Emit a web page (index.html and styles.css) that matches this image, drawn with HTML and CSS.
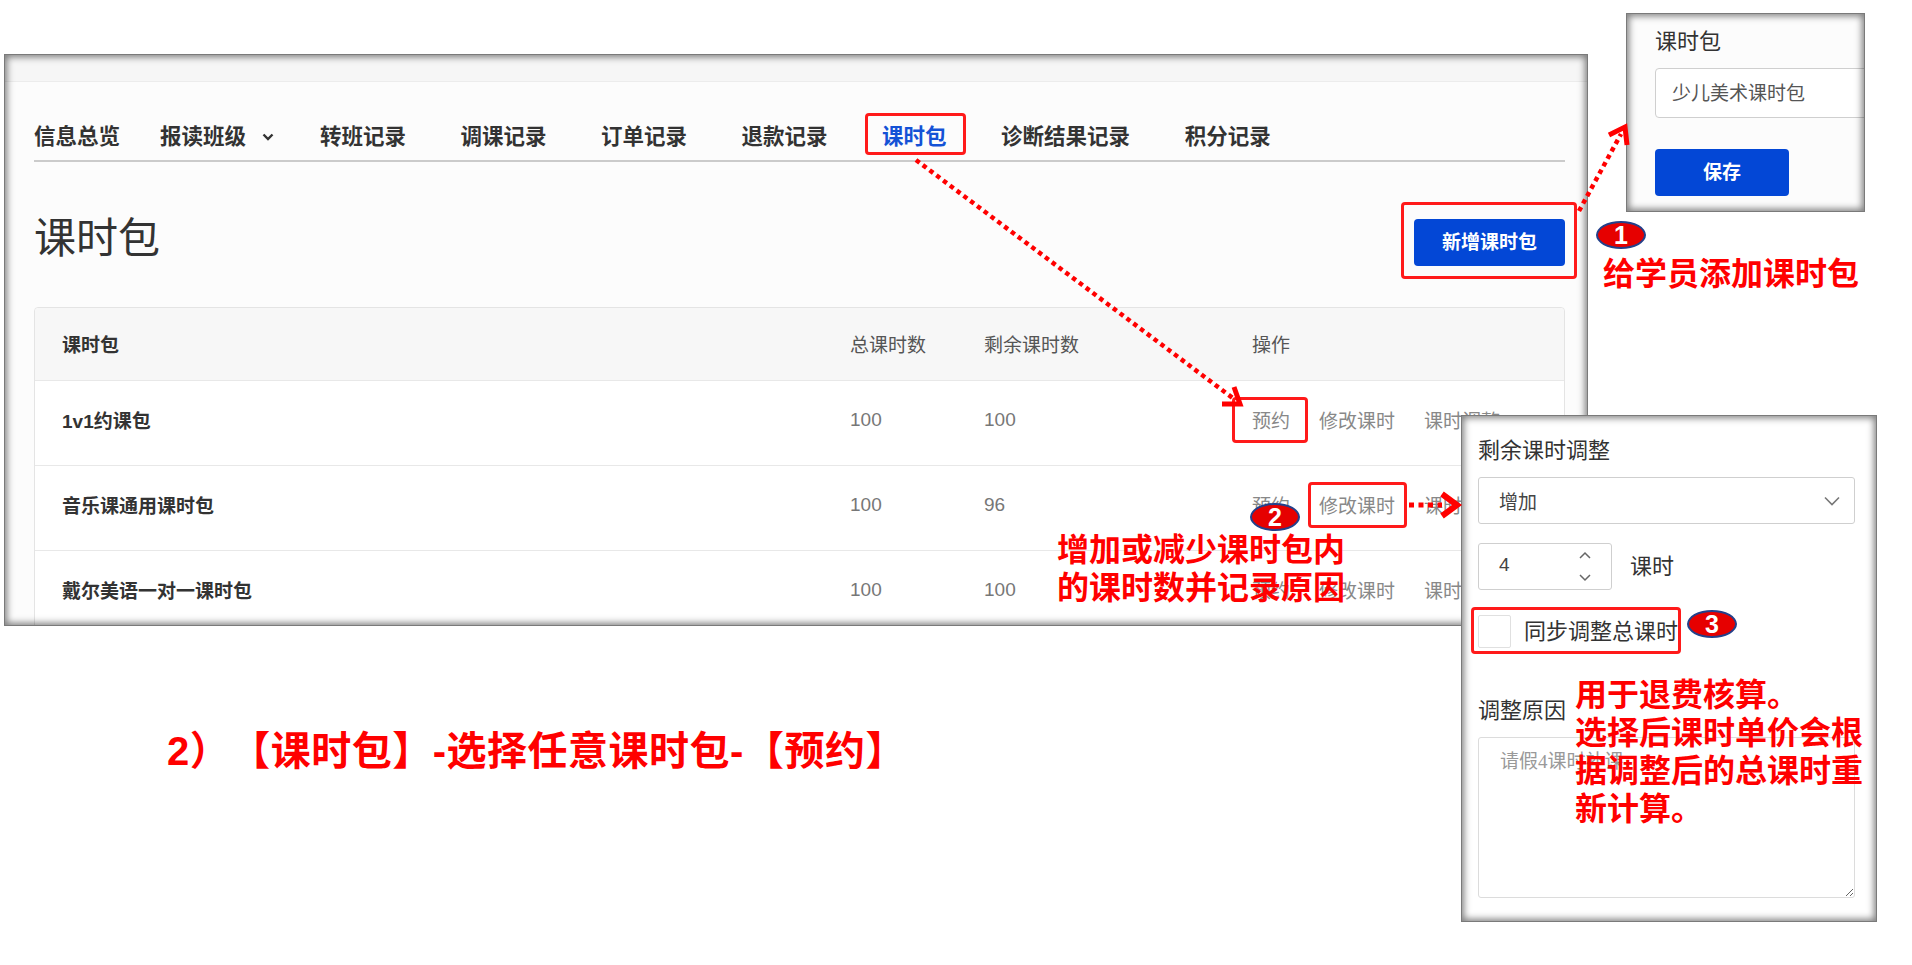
FILE: index.html
```html
<!DOCTYPE html>
<html lang="zh-CN">
<head>
    <meta charset="UTF-8">
    <meta name="viewport" content="width=device-width, initial-scale=1.0">
    <title>课时包</title>
    <link rel="stylesheet" href="styles.css">
</head>
<body>
<div class="slide">

    <!-- screenshot of the student page -->
    <div class="shot main-shot">
        <div class="shot-top"></div>
        <div class="shot-body">
            <nav class="tabs">
                <a class="tab">信息总览</a>
                <a class="tab tab-drop">报读班级
                    <svg width="12" height="8" viewBox="0 0 12 8"><polyline points="1.5,1.5 6,6 10.5,1.5" fill="none" stroke="#333" stroke-width="2.4"/></svg>
                </a>
                <a class="tab">转班记录</a>
                <a class="tab">调课记录</a>
                <a class="tab">订单记录</a>
                <a class="tab">退款记录</a>
                <a class="tab active">课时包</a>
                <a class="tab">诊断结果记录</a>
                <a class="tab">积分记录</a>
            </nav>

            <div class="page-head">
                <h1>课时包</h1>
                <button class="btn btn-add">新增课时包</button>
            </div>

            <div class="table">
                <div class="row row-head">
                    <div class="cell name">课时包</div>
                    <div class="cell">总课时数</div>
                    <div class="cell">剩余课时数</div>
                    <div class="cell">操作</div>
                </div>
                <div class="row">
                    <div class="cell name">1v1约课包</div>
                    <div class="cell num">100</div>
                    <div class="cell num">100</div>
                    <div class="cell actions"><span>预约</span><span>修改课时</span><span>课时调整</span></div>
                </div>
                <div class="row">
                    <div class="cell name">音乐课通用课时包</div>
                    <div class="cell num">100</div>
                    <div class="cell num">96</div>
                    <div class="cell actions"><span>预约</span><span>修改课时</span><span>课时调整</span></div>
                </div>
                <div class="row">
                    <div class="cell name">戴尔美语一对一课时包</div>
                    <div class="cell num">100</div>
                    <div class="cell num">100</div>
                    <div class="cell actions"><span>预约</span><span>修改课时</span><span>课时调整</span></div>
                </div>
            </div>
        </div>
    </div>

    <p class="caption">2）【课时包】-选择任意课时包-【预约】</p>

    <!-- add package dialog -->
    <div class="shot panel panel-save">
        <div class="field-label">课时包</div>
        <input class="text-input" type="text" value="少儿美术课时包">
        <button class="btn btn-save">保存</button>
    </div>

    <!-- adjust hours dialog -->
    <div class="shot panel panel-adjust">
        <div class="field-label">剩余课时调整</div>
        <div class="select">
            <span>增加</span>
            <svg width="16" height="10" viewBox="0 0 16 10"><polyline points="1,1.5 8,8.5 15,1.5" fill="none" stroke="#777" stroke-width="1.6"/></svg>
        </div>
        <div class="num-row">
            <div class="num-input">
                <span>4</span>
                <svg width="14" height="32" viewBox="0 0 14 32"><polyline points="2,7 7,2 12,7" fill="none" stroke="#666" stroke-width="1.5"/><polyline points="2,24 7,29 12,24" fill="none" stroke="#666" stroke-width="1.5"/></svg>
            </div>
            <span class="unit">课时</span>
        </div>
        <label class="check-row"><span class="checkbox"></span>同步调整总课时</label>
        <div class="field-label reason-label">调整原因</div>
        <textarea class="reason" placeholder="请假4课时补课"></textarea>
    </div>

    <!-- annotations -->
    <div class="mark mark-tab"></div>
    <div class="mark mark-add"></div>
    <div class="mark mark-book"></div>
    <div class="mark mark-edit"></div>
    <div class="mark mark-sync"></div>

    <div class="badge badge-1">1</div>
    <div class="badge badge-2">2</div>
    <div class="badge badge-3">3</div>

    <p class="note note-add">给学员添加课时包</p>
    <p class="note note-adjust">增加或减少课时包内<br>的课时数并记录原因</p>
    <p class="note note-sync">用于退费核算。<br>选择后课时单价会根<br>据调整后的总课时重<br>新计算。</p>

    <svg class="arrows" width="1912" height="965" viewBox="0 0 1912 965">
        <g stroke="#ff0000" fill="none" stroke-width="4.5">
            <line x1="916" y1="160" x2="1234" y2="399" stroke-dasharray="4.5 4"/>
            <polyline points="1234,387 1240,404 1222,404" stroke-width="5"/>
            <line x1="1579" y1="211" x2="1621" y2="134" stroke-dasharray="4.5 4"/>
            <polyline points="1609,135 1625,127 1627,145" stroke-width="5"/>
            <line x1="1409" y1="505" x2="1442" y2="505" stroke-dasharray="5 4.5" stroke-width="5"/>
            <polyline points="1442,494 1457,505 1442,516" stroke-width="6"/>
        </g>
    </svg>
</div>
</body>
</html>
```

FILE: styles.css
```css
* {
    box-sizing: border-box;
}

body {
    margin: 0;
    background: #fff;
    font-family: "Liberation Sans", "Noto Sans CJK SC", sans-serif;
    color: #333;
}

.slide {
    position: relative;
    width: 1912px;
    height: 965px;
    overflow: hidden;
    padding: 54px 0 0 4px;
}

/* screenshot frames */
.shot {
    position: relative;
    background: #fcfcfc;
    overflow: hidden;
}

.shot::after {
    content: "";
    position: absolute;
    top: 0;
    left: 0;
    right: 0;
    bottom: 0;
    border: 1px solid #7a7a7a;
    box-shadow: inset 0 0 7px 2px rgba(0, 0, 0, 0.5);
    pointer-events: none;
}

.main-shot {
    width: 1584px;
    height: 572px;
}

.shot-top {
    height: 28px;
    background: #f6f6f6;
    border-bottom: 1px solid #ececec;
}

.shot-body {
    padding: 0 23px 0 30px;
}

/* tabs */
.tabs {
    display: flex;
    align-items: center;
    gap: 54.5px;
    padding: 40px 0 8px;
    border-bottom: 2px solid #cbcbcb;
}

.tab {
    display: flex;
    align-items: center;
    font-size: 21.5px;
    font-weight: 700;
    line-height: 30px;
    color: #333;
    white-space: nowrap;
}

.tab-drop {
    margin-left: -14.5px;
    margin-right: -8.5px;
}

.tab-drop svg {
    margin-left: 16px;
}

.tab.active {
    color: #1452d6;
}

/* title + button */
.page-head {
    display: flex;
    justify-content: space-between;
    align-items: flex-start;
    margin-top: 57px;
}

.page-head h1 {
    margin: 0;
    font-size: 42px;
    font-weight: 400;
    line-height: 40px;
    color: #333;
}

.btn {
    border: 0;
    border-radius: 4px;
    background: #0347d6;
    color: #fff;
    font-family: inherit;
    font-size: 19px;
    font-weight: 700;
    padding: 0 0 4px;
    cursor: pointer;
}

.btn-add {
    width: 151px;
    height: 47px;
}

/* table */
.table {
    margin-top: 41px;
    border: 1px solid #e4e4e4;
    border-radius: 4px;
    background: #fff;
}

.row {
    display: grid;
    grid-template-columns: 787px 134px 268px 1fr;
    align-items: center;
    height: 85px;
    padding-bottom: 7px;
    border-top: 1px solid #e8e8e8;
    font-size: 19px;
    white-space: nowrap;
}

.row-head {
    height: 72px;
    padding-bottom: 2px;
    border-top: 0;
    background: #f7f7f7;
    color: #555;
    border-radius: 4px 4px 0 0;
}

.cell {
    padding-left: 28px;
}

.cell.name {
    padding-left: 27px;
    font-weight: 700;
    color: #333;
}

.cell.num {
    color: #777;
}

.actions {
    display: flex;
    gap: 29px;
    color: #888;
}

.caption {
    margin: 102px 0 0 163px;
    color: #ff0000;
    font-size: 40px;
    font-weight: 700;
    line-height: 46px;
    letter-spacing: 0.5px;
    text-spacing-trim: space-all;
    white-space: nowrap;
}

/* dialogs */
.panel {
    position: absolute;
}

.field-label {
    font-size: 22px;
    line-height: 26px;
    color: #333;
    white-space: nowrap;
}

.panel-save {
    left: 1626px;
    top: 13px;
    width: 239px;
    height: 199px;
    padding: 16px 0 0 29px;
}

.text-input {
    display: block;
    width: 260px;
    height: 50px;
    margin-top: 13px;
    padding: 0 16px 3px;
    border: 1px solid #cfcfcf;
    border-radius: 4px;
    background: #fff;
    font-family: inherit;
    font-size: 19px;
    color: #555;
}

.btn-save {
    display: block;
    width: 134px;
    height: 47px;
    margin-top: 31px;
}

.panel-adjust {
    left: 1461px;
    top: 415px;
    width: 416px;
    height: 507px;
    padding: 23px 22px 0 17px;
    background: #fff;
}

.select {
    display: flex;
    justify-content: space-between;
    align-items: center;
    height: 47px;
    margin-top: 13px;
    padding: 0 14px 0 20px;
    border: 1px solid #cfcfcf;
    border-radius: 3px;
    font-size: 19px;
    color: #444;
}

.num-row {
    display: flex;
    align-items: center;
    margin-top: 19px;
}

.num-input {
    display: flex;
    justify-content: space-between;
    align-items: center;
    width: 134px;
    height: 47px;
    padding: 0 19px 3px 20px;
    border: 1px solid #cfcfcf;
    border-radius: 3px;
    font-size: 19px;
    color: #444;
}

.num-input svg {
    margin-top: 3px;
}

.unit {
    margin-left: 18px;
    margin-bottom: 5px;
    font-size: 22px;
    color: #333;
}

.check-row {
    display: flex;
    align-items: center;
    margin-top: 25px;
    font-size: 22px;
    line-height: 33px;
    color: #333;
}

.checkbox {
    width: 33px;
    height: 33px;
    margin-right: 13px;
    border: 1px solid #e0e0e0;
    border-radius: 2px;
    background: #fff;
}

.reason-label {
    margin-top: 50px;
}

.reason {
    display: block;
    width: 377px;
    height: 161px;
    margin-top: 13px;
    padding: 8px 21px;
    border: 1px solid #dcdcdc;
    border-radius: 3px;
    font-family: "Liberation Serif", "Noto Sans CJK SC", serif;
    font-size: 19px;
}

.reason::placeholder {
    color: #999;
}

/* red annotation layer */
.mark {
    position: absolute;
    border: 3px solid #ff1a1a;
    border-radius: 4px;
}

.mark-tab {
    left: 865px;
    top: 113px;
    width: 101px;
    height: 42px;
}

.mark-add {
    left: 1401px;
    top: 202px;
    width: 176px;
    height: 77px;
}

.mark-book {
    left: 1232px;
    top: 397px;
    width: 76px;
    height: 46px;
}

.mark-edit {
    left: 1308px;
    top: 482px;
    width: 99px;
    height: 46px;
}

.mark-sync {
    left: 1471px;
    top: 607px;
    width: 210px;
    height: 47px;
}

.badge {
    position: absolute;
    width: 50px;
    height: 28px;
    border: 2px solid #24408a;
    border-radius: 50%;
    background: #e60000;
    color: #fff;
    font-size: 25px;
    font-weight: 700;
    line-height: 24px;
    text-align: center;
}

.badge-1 {
    left: 1596px;
    top: 221px;
}

.badge-2 {
    left: 1250px;
    top: 503px;
}

.badge-3 {
    left: 1687px;
    top: 610px;
}

.note {
    position: absolute;
    margin: 0;
    color: #ff0000;
    font-size: 32px;
    font-weight: 700;
    line-height: 38px;
    white-space: nowrap;
}

.note-add {
    left: 1603px;
    top: 255px;
}

.note-adjust {
    left: 1057px;
    top: 531px;
    line-height: 38px;
}

.note-sync {
    left: 1575px;
    top: 676px;
}

.arrows {
    position: absolute;
    top: 0;
    left: 0;
    pointer-events: none;
}
```
